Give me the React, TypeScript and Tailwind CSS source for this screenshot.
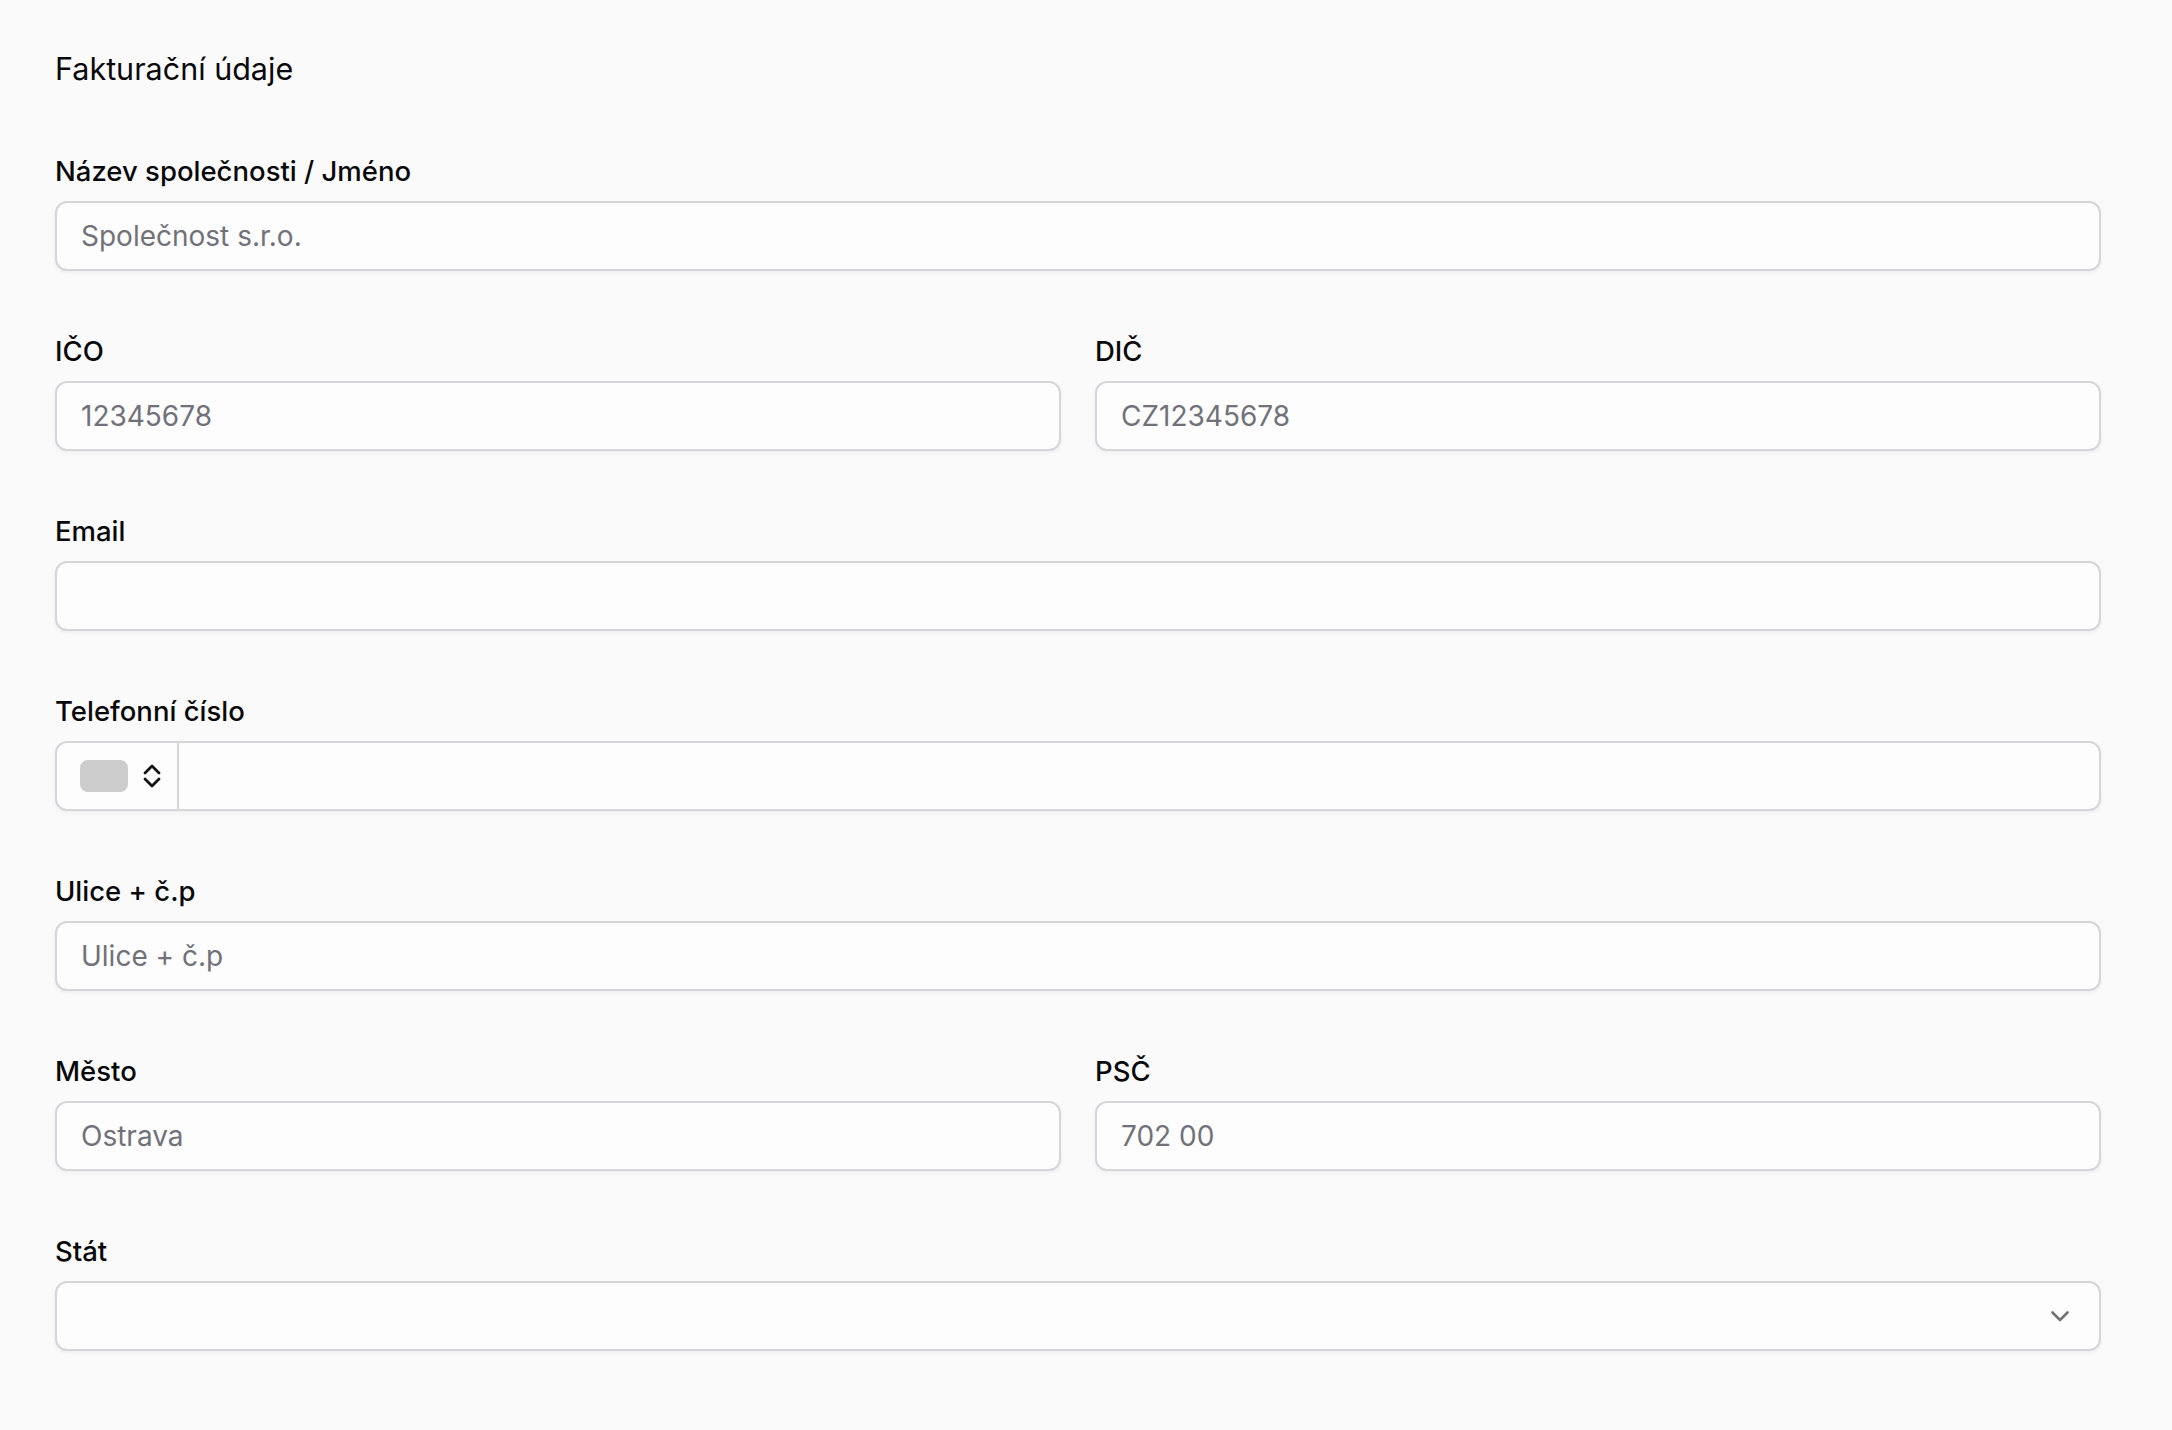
import React from "react";

const inputBase =
  "h-[70px] w-full rounded-[12px] border-2 border-[#d6d5db] bg-[#fdfdfd] px-[24px] text-[28px] text-[#18181b] shadow-[0_2px_4px_rgba(0,0,0,0.05)] outline-none placeholder:text-[#71717a]";

function Label({ children }: { children: React.ReactNode }) {
  return (
    <label className="block h-[40px] text-[27.5px] font-medium leading-[38px] text-[#09090b]">
      {children}
    </label>
  );
}

function Field({ label, placeholder }: { label: string; placeholder?: string }) {
  return (
    <div className="flex flex-col">
      <Label>{label}</Label>
      <input className={"mt-[9px] " + inputBase} placeholder={placeholder} />
    </div>
  );
}

export default function App() {
  return (
    <div
      className="min-h-screen bg-[#fafafa] pb-[60px] pl-[55px] pr-[71px] pt-[48px]"
      style={{ fontFamily: "Inter, 'Noto Sans', sans-serif" }}
    >
      <h2 className="h-[42px] text-[30.5px] font-normal leading-[42px] text-[#09090b]">
        Fakturační údaje
      </h2>
      <div className="mt-[62px] flex flex-col gap-[61px]">
        <Field label="Název společnosti / Jméno" placeholder="Společnost s.r.o." />
        <div className="grid grid-cols-2 gap-[34px]">
          <Field label="IČO" placeholder="12345678" />
          <Field label="DIČ" placeholder="CZ12345678" />
        </div>
        <Field label="Email" />
        <div className="flex flex-col">
          <Label>Telefonní číslo</Label>
          <div className="mt-[9px] flex h-[70px] w-full overflow-hidden rounded-[12px] border-2 border-[#d6d5db] bg-[#fdfdfd] shadow-[0_2px_4px_rgba(0,0,0,0.05)]">
            <div className="flex h-full items-center border-r-2 border-[#d6d5db] pl-[23px] pr-[16px]">
              <div className="h-[32px] w-[48px] rounded-[8px] bg-[#cccccc]" />
              <svg
                className="ml-[15px]"
                width="18"
                height="26"
                viewBox="0 0 18 26"
                fill="none"
                stroke="#111111"
                strokeWidth="2.8"
                strokeLinecap="round"
                strokeLinejoin="round"
              >
                <polyline points="2,10 9,3 16,10" />
                <polyline points="2,16 9,23 16,16" />
              </svg>
            </div>
            <input className="h-full flex-1 bg-transparent px-[24px] text-[28px] text-[#18181b] outline-none" />
          </div>
        </div>
        <Field label="Ulice + č.p" placeholder="Ulice + č.p" />
        <div className="grid grid-cols-2 gap-[34px]">
          <Field label="Město" placeholder="Ostrava" />
          <Field label="PSČ" placeholder="702 00" />
        </div>
        <div className="flex flex-col">
          <Label>Stát</Label>
          <button
            type="button"
            className="mt-[9px] flex h-[70px] w-full items-center justify-end rounded-[12px] border-2 border-[#d6d5db] bg-[#fdfdfd] pr-[30px] shadow-[0_2px_4px_rgba(0,0,0,0.05)]"
          >
            <svg
              width="18"
              height="11"
              viewBox="0 0 18 11"
              fill="none"
              stroke="#737373"
              strokeWidth="2.6"
              strokeLinecap="round"
              strokeLinejoin="round"
            >
              <polyline points="1.5,1.5 9,9 16.5,1.5" />
            </svg>
          </button>
        </div>
      </div>
    </div>
  );
}
